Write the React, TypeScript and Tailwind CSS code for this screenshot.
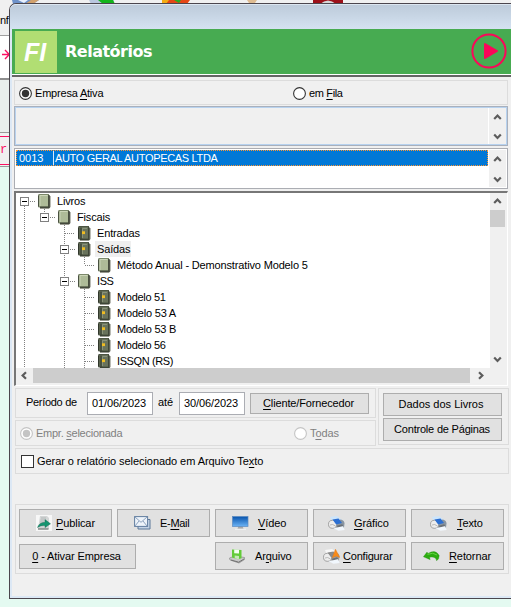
import type { ReactNode } from "react";

type Dir = "up" | "down" | "left" | "right";

function Chevron({ dir }: { dir: Dir }) {
  const paths: Record<Dir, string> = {
    up: "M1.2 6 L4.5 2.6 L7.8 6",
    down: "M1.2 2.6 L4.5 6 L7.8 2.6",
    left: "M6 1.2 L2.6 4.5 L6 7.8",
    right: "M3 1.2 L6.4 4.5 L3 7.8",
  };
  return (
    <svg width="9" height="9" viewBox="0 0 9 9" className="shrink-0">
      <path d={paths[dir]} fill="none" stroke="#5c5c5c" strokeWidth="2.2" />
    </svg>
  );
}

function Radio({ checked, disabled }: { checked?: boolean; disabled?: boolean }) {
  return (
    <svg width="13" height="13" viewBox="0 0 13 13" className="shrink-0">
      <circle cx="6.5" cy="6.5" r="5.9" fill="#fff" stroke={disabled ? "#c4c4c4" : "#333"} strokeWidth="1.1" />
      {checked && <circle cx="6.5" cy="6.5" r="3.7" fill={disabled ? "#c4c4c4" : "#333"} />}
    </svg>
  );
}

function Book({ open }: { open?: boolean }) {
  return (
    <svg width="13" height="15" viewBox="0 0 13 15" className="shrink-0">
      <path d="M2 2 H12.5 V13 L11 14.7 H2 Z" fill="#77786c" />
      <path d="M0 2 L1 0.5 V13 L0 12.5 Z" fill="#171b16" />
      {open ? (
        <>
          <rect x="1" y="0.5" width="9.5" height="12.5" fill="#aebb98" stroke="#7c886b" />
          <path d="M2 12 V1.5 H9.5" fill="none" stroke="#d3ddc0" strokeWidth="0.8" />
          <path d="M10.9 1 V13.3 H2" fill="none" stroke="#43483b" strokeWidth="1.6" />
        </>
      ) : (
        <>
          <rect x="1" y="0.5" width="9.5" height="12.5" fill="#68725b" stroke="#4d5543" />
          <path d="M3 1.5 V13" stroke="#2b3227" />
          <path d="M4.5 2.5 H9 M4.5 2.5 V12" stroke="#98a187" fill="none" strokeWidth="0.7" />
          <rect x="4" y="5.3" width="3" height="2.8" fill="#f0bd22" />
          <path d="M10.8 1 V13.5 H2" fill="none" stroke="#3c4436" strokeWidth="1.2" />
        </>
      )}
    </svg>
  );
}

function TreeRow({ pad, open, selected, width, children }: { pad: string; open?: boolean; selected?: boolean; width: string; children: ReactNode }) {
  return (
    <div className={`flex h-4 items-center ${pad}`}>
      <Book open={open} />
      <span className={`ml-1 h-4 pl-[2px] leading-[16px] whitespace-nowrap ${width} ${selected ? "bg-[#efefef]" : ""}`}>{children}</span>
    </div>
  );
}

function TreeLines() {
  const boxes = [[4, 4], [24, 20], [44, 52], [44, 84]];
  return (
    <svg width="120" height="175" className="absolute top-0 left-0" shapeRendering="crispEdges">
      <g stroke="#808080" strokeDasharray="1 1" fill="none">
        <path d="M8.5 13 V175 M28.5 16 V20 M48.5 32 V175 M68.5 64 V72 M68.5 96 V175" />
        <path d="M14 8.5 H19 M34 24.5 H39 M49 40.5 H59 M54 56.5 H59 M69 72.5 H79 M54 88.5 H59" />
        <path d="M69 104.5 H79 M69 120.5 H79 M69 136.5 H79 M69 152.5 H79 M69 168.5 H79" />
      </g>
      {boxes.map(([x, y]) => (
        <g key={`${x}-${y}`}>
          <rect x={x + 0.5} y={y + 0.5} width="8" height="8" fill="#fff" stroke="#808080" />
          <path d={`M${x + 2} ${y + 4.5} h5`} stroke="#000" />
        </g>
      ))}
    </svg>
  );
}

function Button({ className, children }: { className: string; children: ReactNode }) {
  return (
    <button className={`flex shrink-0 items-center border border-[#adadad] bg-[#e1e1e1] whitespace-nowrap ${className}`}>
      {children}
    </button>
  );
}

function U({ children }: { children: string }) {
  return <span className="underline decoration-1 underline-offset-[2px]">{children}</span>;
}

function PublishIcon() {
  return (
    <svg width="16" height="16" viewBox="0 0 16 16">
      <rect width="16" height="16" fill="#f7f7f7" />
      <path d="M4 1 H11 L13 3 V14 H2 Z" fill="#d3d6d6" />
      <path d="M5 3 H10 M4.5 5 H9 M4 7 H8" stroke="#b4b9b9" />
      <path d="M1.5 12.5 Q3 7.6 9 7.2 V4.6 L14.5 8.8 L9 12.6 V10.5 Q5 10 1.5 12.5Z" fill="#159570" stroke="#0d5f49" strokeWidth=".4" />
      <path d="M2 14 H12.5" stroke="#7d8582" strokeWidth="1.4" />
    </svg>
  );
}

function MailIcon() {
  return (
    <svg width="17" height="14" viewBox="0 0 17 14">
      <path d="M4 3.5 H16 V13 H4 Z" fill="#c4d3e6" stroke="#5c7899" />
      <rect x=".6" y=".6" width="13" height="9.8" fill="#edf3fa" stroke="#617d9f" />
      <path d="M1 1 L7 6.3 L13 1 M1 10 L5 5 M13 10 L9 5" fill="none" stroke="#8da3bf" />
    </svg>
  );
}

function MonitorIcon() {
  return (
    <svg width="17" height="14" viewBox="0 0 17 14">
      <defs>
        <linearGradient id="screen" x2="0" y2="1">
          <stop stopColor="#0753ad" />
          <stop offset="1" stopColor="#6db4f5" />
        </linearGradient>
      </defs>
      <path d="M6.5 10 H10.5 L11.5 12.7 H5.5 Z" fill="#a9a9a9" />
      <rect x=".5" y=".5" width="15.5" height="10" fill="url(#screen)" stroke="#5c8ac0" strokeWidth=".7" />
      <path d="M3 13.3 H14" stroke="#f3f3f3" />
    </svg>
  );
}

function PrinterIcon({ config }: { config?: boolean }) {
  return (
    <svg width="17" height="15" viewBox="0 0 17 15">
      <path d="M2 1 L9 0 L13.5 3.5 L15 6 L4 6 Z" fill={config ? "#f7f7f7" : "#cde5fb"} />
      <path d="M5 5 L13 3.5 Q16.5 4.5 16.5 7.5 L16 11.5 L10 13.5 L4 12 Z" fill={config ? "#9e9e9e" : "#8995a1"} />
      <ellipse cx="4.6" cy="8.3" rx="4.1" ry="4" fill="#ededed" stroke="#929292" strokeWidth=".8" />
      <path d="M2 9 Q4.5 7.5 7.5 10" fill="none" stroke="#a9a9a9" strokeWidth=".8" />
      <path d="M4.5 3.4 L10.5 2.4 L14 7 L8.2 8.6 Z" fill={config ? "#8b8b8b" : "#2b6fd2"} />
      <path d="M8.8 9.8 L14.2 8.2 L15.3 10 L9.8 11.6 Z" fill="#6c7176" />
      <path d="M5 12 L9 11.4 L15 10.3 L16.7 14 L10.5 14.8 Z" fill="#f1f7fd" />
      {config && <path d="M12.5 .3 L16.7 8.4 L13 7 L9.3 8.8 Z" fill="#f88b19" stroke="#e87c16" strokeWidth=".5" />}
    </svg>
  );
}

function DiskIcon() {
  return (
    <svg width="16" height="15" viewBox="0 0 16 15">
      <path d="M.5 9 L6 7 L15.5 8.5 V10.5 L10 14 L1 11 Z" fill="#c8c8c8" stroke="#8b8b8b" strokeWidth=".7" />
      <path d="M2 11 L9.7 13.2 L15 10" fill="none" stroke="#707070" />
      <path d="M3 .5 L12.5 1 V9.3 L9 10.3 L3 8.5 Z" fill="#62cb38" />
      <path d="M5.2 .6 L10 .8 V4.6 L5.2 4.2 Z" fill="#f3fff0" />
      <path d="M5.7 9.2 V6.6 L10 7 V9.8 L9 10.2 Z" fill="#c6e9b8" />
    </svg>
  );
}

function ReturnIcon() {
  return (
    <svg width="17" height="11" viewBox="0 0 17 11">
      <path d="M.4 5.8 L4 1 L5 2.4 Q12.5 -2 16.2 4.5 Q16.4 8 13.6 9.8 Q13 5.4 6.6 6.2 L7.2 8.7 Z" fill="#2cac10" stroke="#2a8a17" strokeWidth=".3" />
      <path d="M4.5 3.4 Q10 .8 14 4" stroke="#66d343" fill="none" />
    </svg>
  );
}

function Background() {
  return (
    <div className="flex h-[607px] w-[511px] flex-col overflow-hidden bg-[#e4faf1]">
      <div className="h-[35px] shrink-0 bg-[#f0f0f0] text-black">
        <svg width="511" height="4" className="block">
          <path d="M12 0 H39 L33 4 H13Z" fill="#6d91c9" />
          <path d="M18 0 H28 L24 3Z" fill="#e9f0fb" />
          <path d="M31 0 H39 L33 4 H25Z" fill="#d2a16c" />
          <path d="M89 0 H114 V4 H91Z" fill="#b9c7df" />
          <path d="M98 0 H113 L115 4 H103Z" fill="#13b51b" />
          <path d="M162 0 H190 L187 4 H162Z" fill="#e54715" />
          <path d="M162 0 H169 L166 4 H162Z" fill="#f4ac12" />
          <path d="M174 0 H181 L179 3Z" fill="#2aac20" />
          <path d="M247 0 H257 L255 3 H249Z" fill="#dfbc91" />
          <path d="M313 0 H343 V3.5 H313Z" fill="#9c1018" />
          <path d="M320 4 Q328 -3 336 4Z" fill="#d7d7d7" />
        </svg>
        <div className="h-[31px] pt-[9px] text-[11px] leading-[14px] tracking-[-0.4px]">nf</div>
      </div>
      <div className="flex h-[43px] shrink-0 items-center border-t border-[#a0a0a0] bg-white pb-[6px]">
        <svg width="10" height="11" viewBox="0 0 10 11">
          <path d="M2 5.5 H9 M5 1 L9.3 5.5 L5 10" fill="none" stroke="#fb1062" strokeWidth="1.4" />
        </svg>
      </div>
      <div className="h-[54px] shrink-0 border-t-2 border-[#8e8e8e] bg-[#e9efec]" />
      <div className="h-[4px] shrink-0 border-t border-[#999] bg-[#f0f0f0]" />
      <div className="h-[29px] w-3 shrink-0 border-y border-[#fb1062] bg-[#f0f0f0] pt-[6px] font-['Liberation_Mono',monospace] text-[12px] leading-[14px] text-[#fb1062]">r</div>
      <div className="h-[2px] shrink-0 border-b border-[#999] bg-[#f0f0f0]" />
    </div>
  );
}

export default function App() {
  return (
    <div className="relative h-[607px] w-[511px] overflow-hidden font-['Liberation_Sans',Arial,sans-serif] text-[11px] leading-[13px] tracking-[-0.1px] text-black">
      <Background />
      <main className="absolute top-[3px] left-[9px] flex h-[596px] w-[502px] flex-col rounded-tl-[7px] border-t border-b border-l border-[#4b464d] bg-[#dce8f5]">
        <div className="h-[25px] shrink-0 rounded-tl-[6px] border-t border-[#dce6f0] bg-gradient-to-b from-[#bdcbda] to-[#d4e2f1]" />
        <div className="ml-[2px] flex h-[567px] w-[499px] flex-col bg-[#f0f0f0]">
          <header className="flex h-[45px] shrink-0 items-center bg-[#47ab51] text-white">
            <div className="ml-[3px] flex h-[42px] w-[42px] items-center justify-center bg-[#b1de73]">
              <span className="mr-[2px] text-[25px] leading-[28px] font-bold tracking-normal italic">FI</span>
            </div>
            <h1 className="ml-[8px] font-['DejaVu_Sans',Verdana,sans-serif] text-[16px] leading-[20px] font-bold tracking-[-0.5px]">Relatórios</h1>
            <svg width="36" height="36" viewBox="0 0 36 36" className="mr-[4px] mb-px ml-auto">
              <circle cx="18" cy="18" r="16.6" fill="none" stroke="#fb0759" strokeWidth="2" />
              <path d="M14 11 L26 18 L14 25 Z" fill="#fb0759" stroke="#fb0759" strokeWidth="2" strokeLinejoin="round" />
            </svg>
          </header>
          <div className="h-[3px] shrink-0 border-b-2 border-[#656565] bg-white" />

          <section className="mt-[3px] ml-[2px] flex h-[25px] w-[494px] shrink-0 items-center border border-[#dcdcdc] pt-px pl-[4px]">
            <Radio checked />
            <span className="ml-[3px] w-[258px] tracking-[-0.2px]">Empresa <U>A</U>tiva</span>
            <Radio />
            <span className="ml-[3px] tracking-[-0.35px]">em <U>F</U>ila</span>
          </section>

          <section className="mt-px ml-[2px] flex h-[40px] w-[494px] shrink-0 border border-[#a9b0bc] bg-[#f0f0f0]">
            <div className="flex w-full justify-end border border-[#b7d2ef]">
              <div className="flex w-[18px] flex-col items-center justify-between border-l border-white pt-[5px] pb-[3px]">
                <Chevron dir="up" />
                <Chevron dir="down" />
              </div>
            </div>
          </section>

          <section className="mt-[2px] ml-[2px] flex h-[41px] w-[494px] shrink-0 border border-[#abadb3] bg-white p-px">
            <div className="mr-px flex h-[16px] grow items-center border border-dotted border-[#ff9632] bg-[#0078d7] text-white">
              <span className="w-[36px] pl-[2px] tracking-[0px]">0013</span>
              <span className="flex h-full items-center border-l border-[#d7e9fa] pl-px tracking-[-0.33px] whitespace-nowrap">AUTO GERAL AUTOPECAS LTDA</span>
            </div>
            <div className="flex w-[17px] flex-col items-center justify-between bg-[#f0f0f0] pt-[5px] pb-[3px]">
              <Chevron dir="up" />
              <Chevron dir="down" />
            </div>
          </section>

          <section className="mt-[2px] ml-[2px] flex h-[195px] w-[494px] shrink-0 flex-col border border-t-2 border-l-2 border-t-[#777] border-r-white border-b-white border-l-[#777] bg-[#f0f0f0]">
            <div className="flex h-[175px] shrink-0">
              <div className="relative w-[474px] overflow-hidden bg-white tracking-[-0.15px]">
                <TreeLines />
                <TreeRow pad="pl-[22px]" width="" open>Livros</TreeRow>
                <TreeRow pad="pl-[42px]" width="" open>Fiscais</TreeRow>
                <TreeRow pad="pl-[62px]" width="">Entradas</TreeRow>
                <TreeRow pad="pl-[62px]" width="w-[36px]" selected>Saídas</TreeRow>
                <TreeRow pad="pl-[82px]" width="" open>Método Anual - Demonstrativo Modelo 5</TreeRow>
                <TreeRow pad="pl-[62px]" width="tracking-[-0.4px]" open>ISS</TreeRow>
                <TreeRow pad="pl-[82px]" width="tracking-[-0.3px]">Modelo 51</TreeRow>
                <TreeRow pad="pl-[82px]" width="tracking-[-0.2px]">Modelo 53 A</TreeRow>
                <TreeRow pad="pl-[82px]" width="tracking-[-0.25px]">Modelo 53 B</TreeRow>
                <TreeRow pad="pl-[82px]" width="tracking-[-0.3px]">Modelo 56</TreeRow>
                <TreeRow pad="pl-[82px]" width="tracking-[-0.4px]">ISSQN (RS)</TreeRow>
              </div>
              <div className="flex w-[15px] flex-col items-center">
                <div className="flex h-[17px] items-center"><Chevron dir="up" /></div>
                <div className="h-[17px] w-[15px] bg-[#cdcdcd]" />
                <div className="mt-auto mb-[4px]"><Chevron dir="down" /></div>
              </div>
            </div>
            <div className="flex h-[15px] items-center">
              <div className="flex w-[17px] justify-center"><Chevron dir="left" /></div>
              <div className="h-[15px] w-[437px] bg-[#cdcdcd]" />
              <div className="ml-[6px]"><Chevron dir="right" /></div>
            </div>
          </section>

          <div className="mt-[2px] ml-[3px] flex shrink-0 gap-[2px]">
            <div className="flex flex-col gap-[2px]">
              <section className="flex h-[30px] w-[361px] items-center border border-[#dcdcdc] pl-[10px]">
                <span className="mb-px w-[61px] tracking-[-0.3px]">Período de</span>
                <div className="mt-px flex h-[23px] w-[66px] items-center border border-[#abadb3] bg-white pl-[4px]">01/06/2023</div>
                <span className="mb-px w-[26px] pl-[5px]">até</span>
                <div className="mt-px flex h-[23px] w-[66px] items-center border border-[#abadb3] bg-white pl-[4px]">30/06/2023</div>
                <Button className="mt-px ml-[5px] h-[21px] w-[119px] justify-center pr-[2px]"><span className="tracking-[-0.15px]"><U>C</U>liente/Fornecedor</span></Button>
              </section>
              <section className="flex h-[26px] w-[361px] items-center border border-[#dcdcdc] pt-px pl-[4px] text-[#808080]">
                <Radio checked disabled />
                <span className="ml-[3px] w-[258px] tracking-[-0.25px]">Empr. <U>s</U>elecionada</span>
                <Radio disabled />
                <span className="ml-[3px]">T<U>o</U>das</span>
              </section>
            </div>
            <section className="flex h-[57px] w-[131px] flex-col gap-[2px] border border-[#dcdcdc] pt-[4px] pl-[4px]">
              <Button className="h-[23px] w-[119px] justify-center pr-[3px] tracking-[0px]">Dados dos Livros</Button>
              <Button className="h-[23px] w-[119px] justify-center pr-px tracking-[-0.2px]">Controle de Páginas</Button>
            </section>
          </div>

          <section className="mt-[2px] ml-[3px] flex h-[26px] w-[494px] shrink-0 items-center border border-[#dcdcdc] pl-[5px]">
            <div className="h-[13px] w-[13px] border border-[#333] bg-white" />
            <span className="ml-[3px] tracking-[-0.06px] whitespace-nowrap">Gerar o relatório selecionado em Arquivo Te<U>x</U>to</span>
          </section>

          <section className="mt-[30px] ml-[3px] flex h-[70px] w-[494px] shrink-0 flex-col gap-[5px] border border-[#dcdcdc] pt-[4px] pl-[3px]">
            <div className="flex gap-[5px]">
              <Button className="h-[28px] w-[93px] pl-[16px]"><PublishIcon /><span className="ml-[4px]"><U>P</U>ublicar</span></Button>
              <Button className="h-[28px] w-[93px] pl-[16px]"><MailIcon /><span className="ml-[9px] tracking-[-0.3px]">E-<U>M</U>ail</span></Button>
              <Button className="h-[28px] w-[93px] pl-[16px]"><MonitorIcon /><span className="ml-[9px]"><U>V</U>ídeo</span></Button>
              <Button className="h-[28px] w-[93px] pl-[14px]"><PrinterIcon /><span className="ml-[9px]"><U>G</U>ráfico</span></Button>
              <Button className="h-[28px] w-[93px] pl-[18px]"><PrinterIcon /><span className="ml-[10px]"><U>T</U>exto</span></Button>
            </div>
            <div className="flex items-center gap-[5px]">
              <Button className="mr-[74px] h-[25px] w-[117px] justify-center pr-[2px]"><span className="tracking-[-0.1px]"><U>0</U> - Ativar Empresa</span></Button>
              <Button className="h-[28px] w-[93px] pl-[13px]"><DiskIcon /><span className="ml-[10px]">Ar<U>q</U>uivo</span></Button>
              <Button className="h-[28px] w-[93px] pl-[9px]"><PrinterIcon config /><span className="ml-[3px] tracking-[-0.2px]"><U>C</U>onfigurar</span></Button>
              <Button className="h-[28px] w-[93px] pl-[11px]"><ReturnIcon /><span className="ml-[9px]"><U>R</U>etornar</span></Button>
            </div>
          </section>
        </div>
      </main>
    </div>
  );
}
